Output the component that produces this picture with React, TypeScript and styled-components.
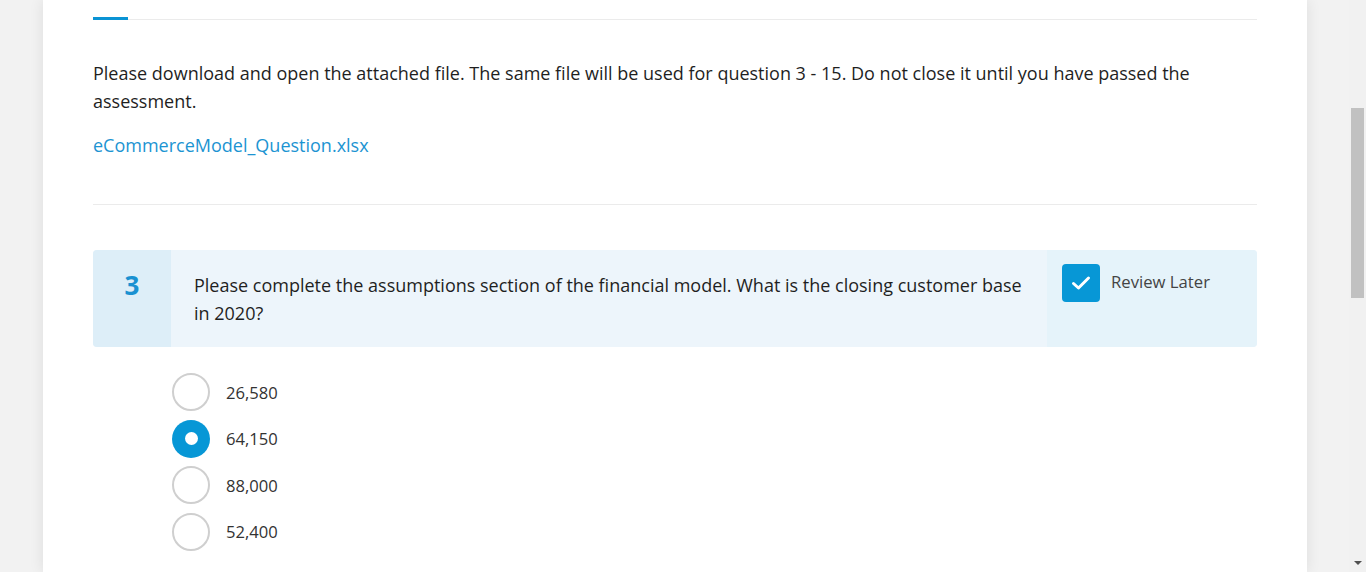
import React from "react";
import styled, { createGlobalStyle } from "styled-components";

const GlobalStyle = createGlobalStyle`
  html, body {
    margin: 0;
    padding: 0;
    height: 100%;
    overflow: hidden;
    background: #f2f2f2;
  }
  body {
    font-family: "Open Sans", "Liberation Sans", Arial, sans-serif;
    color: #222;
  }
`;

const Page = styled.div`
  display: flex;
  min-height: 572px;
  padding: 0 59px 0 43px;
`;

const Card = styled.main`
  flex: 1;
  background: #fff;
  box-shadow: 0 0 14px rgba(0, 0, 0, 0.09);
  padding: 0 50px;
  min-height: 572px;
`;

const TabBar = styled.div`
  display: flex;
  height: 19px;
  align-items: flex-end;
  border-bottom: 1px solid #ebebeb;
`;

const TabActive = styled.div`
  width: 35px;
  height: 3px;
  margin-bottom: -1px;
  background: #0a93d4;
`;

const Intro = styled.section`
  padding: 39px 0 45px;
  border-bottom: 1px solid #ebebeb;
`;

const Para = styled.p`
  margin: 0;
  font-size: 18px;
  line-height: 28px;
  color: #1f1f1f;
`;

const FileLink = styled.a`
  display: inline-block;
  margin-top: 16px;
  font-size: 18px;
  line-height: 28px;
  color: #1c94d2;
  text-decoration: none;
`;

const Question = styled.section`
  margin-top: 45px;
  display: flex;
  border-radius: 4px;
  overflow: hidden;
  background: #edf5fb;
`;

const Number = styled.div`
  width: 78px;
  flex-shrink: 0;
  background: #ddeef8;
  color: #1a91d1;
  font-size: 26px;
  font-weight: 700;
  text-align: center;
  padding-top: 17px;
  line-height: 36px;
`;

const Prompt = styled.div`
  flex: 1;
  padding: 21px 24px 20px 23px;
  font-size: 18px;
  line-height: 28px;
  color: #1f1f1f;
`;

const ReviewCell = styled.div`
  width: 210px;
  flex-shrink: 0;
  background: #e5f3fa;
  display: flex;
  align-items: flex-start;
  gap: 11px;
  padding: 14px 0 0 15px;
  box-sizing: border-box;
`;

const CheckBox = styled.span`
  width: 38px;
  height: 38px;
  border-radius: 4px;
  background: #0797d6;
  display: flex;
  align-items: center;
  justify-content: center;
`;

const ReviewLabel = styled.span`
  font-size: 16.7px;
  line-height: 36px;
  color: #444;
`;

const Options = styled.div`
  margin-top: 26px;
  padding-left: 79px;
  display: flex;
  flex-direction: column;
  gap: 8.5px;
`;

const Option = styled.label`
  display: flex;
  align-items: center;
  gap: 16px;
  font-size: 16.6px;
  color: #333;
`;

const Radio = styled.span<{ $checked?: boolean }>`
  width: 38px;
  height: 38px;
  border-radius: 50%;
  box-sizing: border-box;
  border: ${(p) => (p.$checked ? "none" : "2px solid #cfcfcf")};
  background: ${(p) => (p.$checked ? "#0797d6" : "#fff")};
  display: flex;
  align-items: center;
  justify-content: center;

  &::after {
    content: "";
    display: ${(p) => (p.$checked ? "block" : "none")};
    width: 13px;
    height: 13px;
    border-radius: 50%;
    background: #fff;
  }
`;

const ScrollTrack = styled.div`
  position: fixed;
  top: 0;
  right: 0;
  width: 17px;
  height: 100%;
  background: #f1f1f1;
`;

const ScrollThumb = styled.div`
  position: absolute;
  top: 108px;
  left: 2px;
  width: 13px;
  height: 190px;
  background: #c1c1c1;
`;

const ScrollArrow = styled.div`
  position: absolute;
  bottom: 7px;
  left: 5px;
  width: 0;
  height: 0;
  border-left: 4px solid transparent;
  border-right: 4px solid transparent;
  border-top: 4px solid #505050;
`;

const answers = ["26,580", "64,150", "88,000", "52,400"];

export default function App() {
  return (
    <>
      <GlobalStyle />
      <Page>
        <Card>
          <TabBar>
            <TabActive />
          </TabBar>
          <Intro>
            <Para>
              Please download and open the attached file. The same file will be used for question 3 - 15. Do not
              close it until you have passed the assessment.
            </Para>
            <FileLink href="#">eCommerceModel_Question.xlsx</FileLink>
          </Intro>
          <Question>
            <Number>3</Number>
            <Prompt>
              Please complete the assumptions section of the financial model. What is the closing customer base in
              2020?
            </Prompt>
            <ReviewCell>
              <CheckBox>
                <svg width="20" height="16" viewBox="0 0 20 16" fill="none">
                  <path d="M2.5 8.5 L7.5 13 L17.5 3" stroke="#fff" strokeWidth="3" strokeLinecap="round" strokeLinejoin="round" />
                </svg>
              </CheckBox>
              <ReviewLabel>Review Later</ReviewLabel>
            </ReviewCell>
          </Question>
          <Options>
            {answers.map((a, i) => (
              <Option key={a}>
                <Radio $checked={i === 1} />
                {a}
              </Option>
            ))}
          </Options>
        </Card>
      </Page>
      <ScrollTrack>
        <ScrollThumb />
        <ScrollArrow />
      </ScrollTrack>
    </>
  );
}
